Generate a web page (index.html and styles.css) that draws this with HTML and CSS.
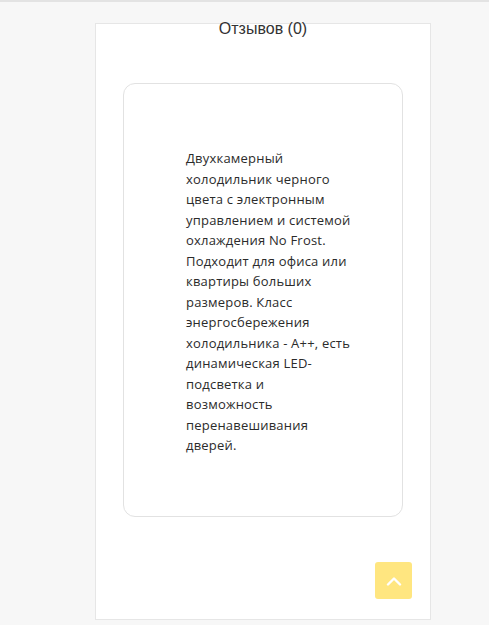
FILE: index.html
```html
<!DOCTYPE html>
<html lang="ru">
<head>
<meta charset="utf-8">
<title>Отзывы</title>
<link rel="stylesheet" href="styles.css">
</head>
<body>
<div class="topbar"></div>
<div class="panel">
  <h2 class="title">Отзывов (0)</h2>
  <div class="card">
    <p class="desc">Двухкамерный холодильник черного цвета с электронным управлением и системой охлаждения No Frost. Подходит для офиса или квартиры больших размеров. Класс энергосбережения холодильника - А++, есть динамическая LED-подсветка и возможность перенавешивания дверей.</p>
  </div>
  <a class="totop" href="#" aria-label="Наверх">
    <svg width="16" height="10" viewBox="0 0 16 10"><path d="M2 8.5 L8 2.5 L14 8.5" fill="none" stroke="#fff" stroke-width="2.4" stroke-linecap="round" stroke-linejoin="round"/></svg>
  </a>
</div>
</body>
</html>
```
FILE: styles.css
```css
html, body {
  margin: 0;
  padding: 0;
}
body {
  background: #f7f7f7;
  width: 489px;
  height: 625px;
  overflow: hidden;
}
.topbar {
  height: 2px;
  background: #e3e3e3;
}
.panel {
  position: relative;
  box-sizing: border-box;
  margin: 21px 0 0 95px;
  width: 336px;
  height: 597px;
  background: #fff;
  border: 1px solid #e6e6e6;
  padding: 0 27px;
}
.title {
  margin: -4px 0 0;
  font-family: "Liberation Sans", Arial, sans-serif;
  font-weight: normal;
  font-size: 16px;
  line-height: 18px;
  color: #333;
  text-align: center;
}
.card {
  box-sizing: border-box;
  margin-top: 45px;
  width: 280px;
  height: 434px;
  border: 1px solid #e2e2e2;
  border-radius: 12px;
  padding: 64px 0 0 62px;
}
.desc {
  margin: 0;
  width: 166px;
  font-family: "Open Sans", sans-serif;
  font-size: 13px;
  line-height: 20.5px;
  letter-spacing: 0.2px;
  color: #2b2b2b;
}
.totop {
  position: absolute;
  left: 279px;
  top: 538px;
  width: 37px;
  height: 37px;
  border-radius: 3px;
  background: #ffe680;
  display: flex;
  align-items: center;
  justify-content: center;
}
.totop svg {
  display: block;
}
```
